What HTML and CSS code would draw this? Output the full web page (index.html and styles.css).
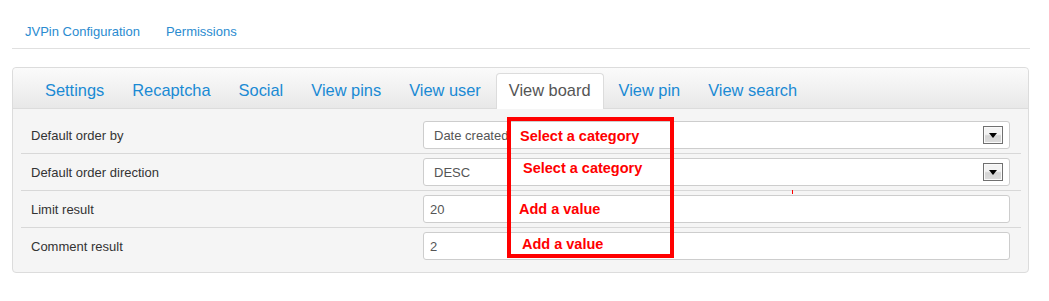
FILE: index.html
```
<!DOCTYPE html>
<html lang="en">
<head>
  <meta charset="UTF-8">
  <meta name="viewport" content="width=device-width, initial-scale=1.0">
  <title>JVPin Configuration</title>
  <link rel="stylesheet" href="styles.css">
</head>

<body>
  <!-- top sub menu -->
  <ul class="topnav">
    <li><a href="#">JVPin Configuration</a></li>
    <li><a href="#">Permissions</a></li>
  </ul>

  <div class="panel">
    <ul class="tabs">
      <li class="tab"><a href="#">Settings</a></li>
      <li class="tab"><a href="#">Recaptcha</a></li>
      <li class="tab"><a href="#">Social</a></li>
      <li class="tab"><a href="#">View pins</a></li>
      <li class="tab"><a href="#">View user</a></li>
      <li class="tab active"><a href="#">View board</a></li>
      <li class="tab"><a href="#">View pin</a></li>
      <li class="tab"><a href="#">View search</a></li>
    </ul>

    <div class="panel-body">
      <div class="row">
        <label class="row-label">Default order by</label>
        <div class="field select">
          <span>Date created</span>
          <span class="drop"></span>
        </div>
      </div>
      <div class="row">
        <label class="row-label">Default order direction</label>
        <div class="field select">
          <span>DESC</span>
          <span class="drop"></span>
        </div>
      </div>
      <div class="row">
        <label class="row-label">Limit result</label>
        <input class="field text" type="text" value="20">
      </div>
      <div class="row">
        <label class="row-label">Comment result</label>
        <input class="field text" type="text" value="2">
      </div>
    </div>
  </div>

  <!-- annotation drawn over the form -->
  <div class="note">
    <span class="note-text n1">Select a category</span>
    <span class="note-text n2">Select a category</span>
    <span class="note-text n3">Add a value</span>
    <span class="note-text n4">Add a value</span>
  </div>
  <span class="tick"></span>
</body>
</html>
```

FILE: styles.css
```
body {
    margin: 0;
    font-family: 'Liberation Sans', Arial, sans-serif;
    font-size: 13px;
    color: #333;
    background-color: #fff;
    position: relative;
}

a {
    text-decoration: none;
}

.topnav {
    display: flex;
    list-style: none;
    margin: 0 19px 0 12px;
    padding: 23px 0 7px 13px;
    border-bottom: 1px solid #e0e0e0;
}

.topnav li {
    line-height: 18px;
    margin-right: 26px;
}

.topnav a {
    color: #2a8bd0;
}

.panel {
    margin: 18px 20px 0 12px;
    border: 1px solid #dcdcdc;
    border-radius: 4px;
    background-color: #f5f5f5;
}

.tabs {
    display: flex;
    list-style: none;
    margin: 0;
    padding: 5px 0 0 19px;
    border-bottom: 1px solid #dcdcdc;
    border-radius: 4px 4px 0 0;
    background: linear-gradient(#fbfbfb, #e8e8e8);
}

.tab {
    margin: 0 2px -1px 0;
    border: 1px solid transparent;
    border-bottom: 0;
    border-radius: 4px 4px 0 0;
}

.tab a {
    display: block;
    padding: 0 12px 2px;
    line-height: 33px;
    font-size: 16.4px;
    color: #1a8ad4;
}

.tab.active {
    background-color: #fff;
    border-color: #dcdcdc;
}

.tab.active a {
    color: #555;
}

.panel-body {
    padding: 8px 7px 8px 8px;
}

.row {
    display: flex;
    align-items: center;
    padding: 4px 11px 4px 0;
    border-bottom: 1px solid #d8d8d8;
}

.row:last-child {
    border-bottom: 0;
}

.row-label {
    width: 392px;
    padding-left: 10px;
    color: #333;
}

.field {
    flex: 1;
    box-sizing: border-box;
    height: 28px;
    margin: 0;
    border: 1px solid #cdcdcd;
    border-radius: 3px;
    background-color: #fff;
    font-family: inherit;
    font-size: 13px;
    color: #555;
}

.select {
    display: flex;
    align-items: center;
    justify-content: space-between;
    padding: 0 6px 0 10px;
}

.text {
    padding: 0 6px;
    outline: none;
}

/* classic windows style dropdown button */
.drop {
    position: relative;
    box-sizing: border-box;
    width: 20px;
    height: 18px;
    border: 1px solid #707070;
    box-shadow: inset 0 0 0 1px #fafafa;
    background: linear-gradient(#f3f3f3 45%, #d4d4d4 55%, #dcdcdc);
}

.drop::after {
    content: '';
    position: absolute;
    left: 5px;
    top: 6px;
    border-left: 4px solid transparent;
    border-right: 4px solid transparent;
    border-top: 5px solid #000;
}

.note {
    position: absolute;
    left: 507px;
    top: 117px;
    width: 159px;
    height: 133px;
    border: 4px solid #f00;
}

.note-text {
    position: absolute;
    font-size: 14.5px;
    line-height: 14.5px;
    font-weight: bold;
    color: #f00;
    white-space: nowrap;
}

.n1 { left: 9px; top: 8px; }
.n2 { left: 12px; top: 40px; }
.n3 { left: 8px; top: 81px; }
.n4 { left: 11px; top: 116px; }

.tick {
    position: absolute;
    left: 792px;
    top: 190px;
    width: 1px;
    height: 4px;
    background-color: #f00;
}
```
